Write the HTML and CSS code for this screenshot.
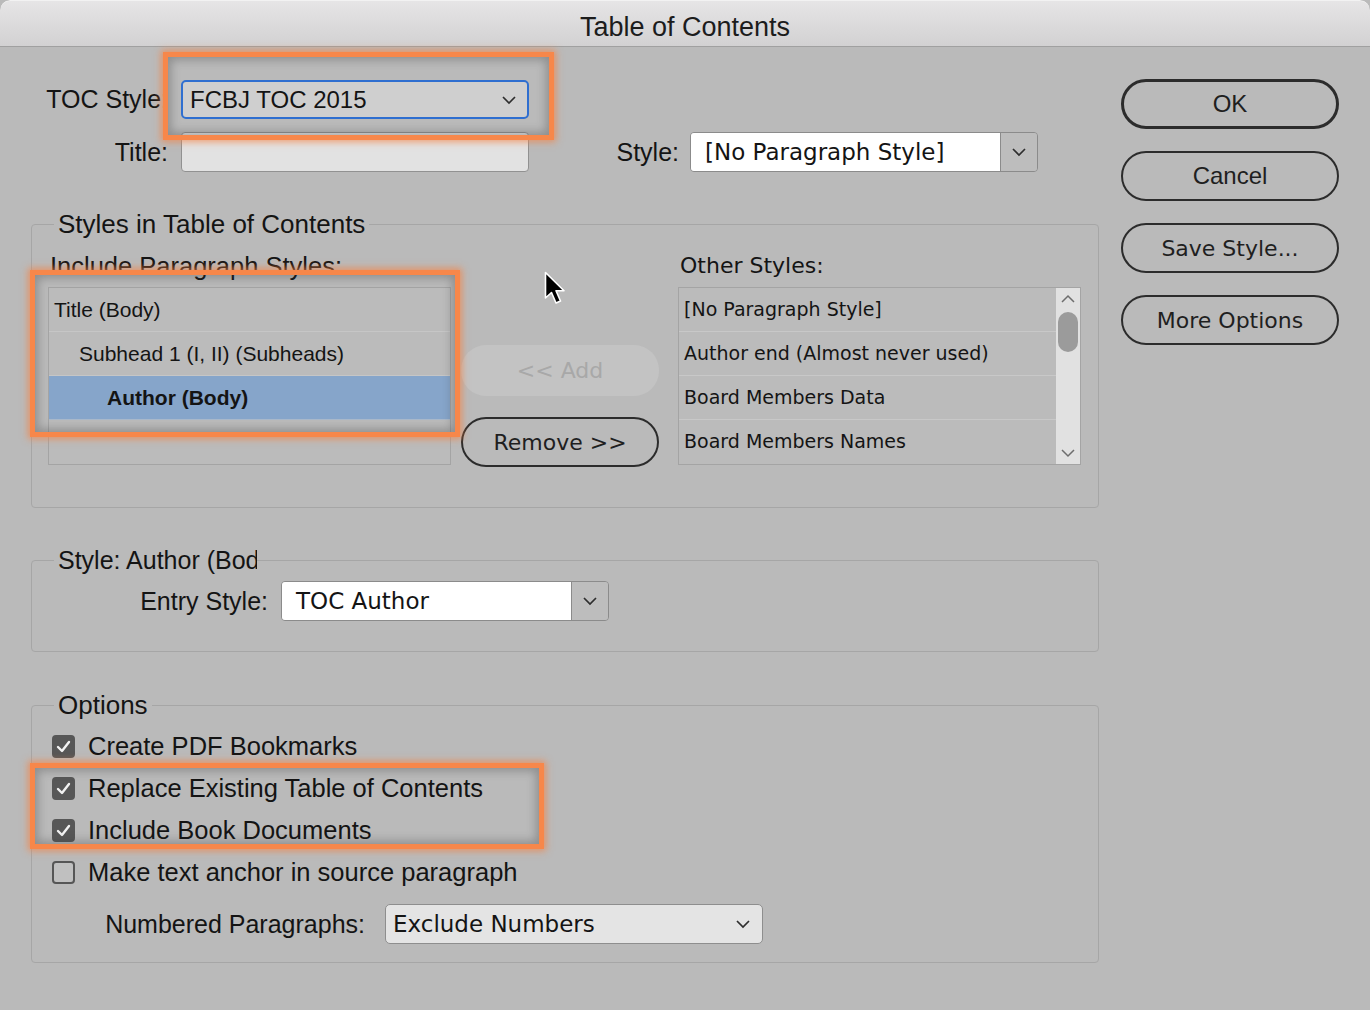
FILE: index.html
```html
<!DOCTYPE html>
<html lang="en">
<head>
    <meta charset="UTF-8">
    <title>Table of Contents</title>
    <link rel="stylesheet" href="styles.css">
</head>
<body>
<div id="dialog">
    <div id="titlebar">Table of Contents</div>

    <div id="content">
        <div id="main">
            <div class="row" id="rowToc">
                <label class="lbl">TOC Style:</label>
                <div class="select blue">
                    <span>FCBJ TOC 2015</span>
                    <svg class="chev" width="16" height="10" viewBox="0 0 16 10"><polyline points="2,2 8,8 14,2"/></svg>
                </div>
            </div>

            <div class="row" id="rowTitle">
                <label class="lbl">Title:</label>
                <div class="textfield"></div>
                <label class="lbl lblStyle">Style:</label>
                <div class="combo" id="comboStyle">
                    <span class="comboVal">[No Paragraph Style]</span>
                    <span class="comboBtn"><svg class="chev" width="16" height="10" viewBox="0 0 16 10"><polyline points="2,2 8,8 14,2"/></svg></span>
                </div>
            </div>

            <fieldset id="grpStyles">
                <legend>Styles in Table of Contents</legend>
                <div id="styleGrid">
                    <div class="colHead" id="headInc">Include Paragraph Styles:</div>
                    <div class="colHead" id="headOther">Other Styles:</div>

                    <ul class="list" id="incList">
                        <li class="lv0">Title (Body)</li>
                        <li class="lv1">Subhead 1 (I, II) (Subheads)</li>
                        <li class="lv2 sel">Author (Body)</li>
                    </ul>

                    <div id="midBtns">
                        <div class="btn disabled">&lt;&lt; Add</div>
                        <div class="btn lucida">Remove &gt;&gt;</div>
                    </div>

                    <div class="list" id="otherList">
                        <ul>
                            <li>[No Paragraph Style]</li>
                            <li>Author end (Almost never used)</li>
                            <li>Board Members Data</li>
                            <li>Board Members Names</li>
                        </ul>
                        <div class="scrollbar">
                            <svg class="arrow" width="16" height="10" viewBox="0 0 16 10"><polyline points="2,8 8,2 14,8"/></svg>
                            <div class="thumb"></div>
                            <svg class="arrow down" width="16" height="10" viewBox="0 0 16 10"><polyline points="2,2 8,8 14,2"/></svg>
                        </div>
                    </div>
                </div>
            </fieldset>

            <fieldset id="grpEntry">
                <legend class="clip">Style: Author (Body)</legend>
                <div class="row">
                    <label class="lbl lblEntry">Entry Style:</label>
                    <div class="combo" id="comboEntry">
                        <span class="comboVal">TOC Author</span>
                        <span class="comboBtn"><svg class="chev" width="16" height="10" viewBox="0 0 16 10"><polyline points="2,2 8,8 14,2"/></svg></span>
                    </div>
                </div>
            </fieldset>

            <fieldset id="grpOptions">
                <legend>Options</legend>
                <div class="check"><span class="box on"><svg width="23" height="23" viewBox="0 0 23 23"><polyline points="6,12 10,16 17,7"/></svg></span>Create PDF Bookmarks</div>
                <div class="check"><span class="box on"><svg width="23" height="23" viewBox="0 0 23 23"><polyline points="6,12 10,16 17,7"/></svg></span>Replace Existing Table of Contents</div>
                <div class="check"><span class="box on"><svg width="23" height="23" viewBox="0 0 23 23"><polyline points="6,12 10,16 17,7"/></svg></span>Include Book Documents</div>
                <div class="check"><span class="box"></span>Make text anchor in source paragraph</div>
                <div class="row" id="rowNum">
                    <label class="lbl lblNum">Numbered Paragraphs:</label>
                    <div class="select grey">
                        <span>Exclude Numbers</span>
                        <svg class="chev" width="16" height="10" viewBox="0 0 16 10"><polyline points="2,2 8,8 14,2"/></svg>
                    </div>
                </div>
            </fieldset>
        </div>

        <div id="side">
            <div class="btn default">OK</div>
            <div class="btn">Cancel</div>
            <div class="btn lucida">Save Style...</div>
            <div class="btn lucida">More Options</div>
        </div>
    </div>

    <!-- annotation marks drawn over the dialog -->
    <div class="mark" id="mark1"></div>
    <div class="mark" id="mark2"></div>
    <div class="mark" id="mark3"></div>

    <svg id="cursor" width="24" height="36" viewBox="0 0 24 36">
        <path d="M1.5 1.5 L1.5 27 L7.5 21.5 L12 32 L16.5 30 L12 19.8 L20 19.8 Z" fill="#000" stroke="#fff" stroke-width="1.6" stroke-linejoin="round"/>
    </svg>
</div>
</body>
</html>
```

FILE: styles.css
```css
* { box-sizing: border-box; }
body { margin: 0; background: #bababa; }
ul { margin: 0; padding: 0; list-style: none; }

#dialog {
    position: relative;
    width: 1370px; height: 1010px; overflow: hidden;
    background: #bababa;
    border-radius: 10px 10px 0 0;
    font-family: "Liberation Sans", Arial, sans-serif;
    color: #141414;
}
#titlebar {
    height: 47px;
    background: linear-gradient(#e6e5e6, #d2d1d2);
    border-bottom: 1px solid #a0a0a0;
    border-top: 1px solid #f2f2f2;
    border-radius: 10px 10px 0 0;
    text-align: center;
    font-size: 27px; line-height: 52px;
    color: #1c1c1c;
}

#content { display: flex; }
#main { width: 1099px; }
#side {
    width: 218px; margin-left: 22px; padding-top: 32px;
    display: flex; flex-direction: column; gap: 22px;
}

.row { display: flex; align-items: center; }
.lbl { font-size: 25px; text-align: right; flex: none; }
#rowToc { margin-top: 33px; }
#rowToc .lbl, #rowTitle .lbl { width: 168px; margin-right: 13px; }
#rowTitle { margin-top: 13px; }
#rowTitle .lblStyle { width: 150px; margin-right: 11px; }

.chev polyline, .arrow polyline { fill: none; stroke: #2e2e2e; stroke-width: 1.7; }

.select {
    display: flex; align-items: center; justify-content: space-between;
    border-radius: 5px; padding: 0 10px 0 7px;
}
.select.blue {
    width: 348px; height: 39px;
    border: 2px solid #2f6fd0; background: #cfcfcf;
    font-size: 24px;
}
.select.grey {
    width: 378px; height: 40px;
    border: 1px solid #8e8e8e; background: #e4e4e4;
    font-family: "DejaVu Sans", sans-serif; font-size: 23px;
    padding-left: 7px; padding-right: 11px;
}
.textfield {
    width: 348px; height: 40px;
    background: #e2e2e2; border: 1px solid #919191; border-radius: 4px;
}
.combo {
    display: flex; height: 40px;
    border: 1px solid #8b8b8b; border-radius: 4px; overflow: hidden;
    font-family: "DejaVu Sans", sans-serif; font-size: 23px;
}
.comboVal { flex: 1; background: #fff; padding-left: 14px; line-height: 38px; }
.comboBtn {
    width: 37px; border-left: 1px solid #8b8b8b; background: #bdbdbd;
    display: flex; align-items: center; justify-content: center;
}
#comboStyle { width: 348px; }
#comboEntry { width: 328px; }

fieldset {
    margin: 37px 0 0 31px; width: 1068px; min-width: 0;
    border: 1px solid #a6a6a6; border-radius: 4px;
}
legend {
    font-size: 26px; line-height: 30px;
    margin-left: 6px; padding: 0 4px;
}
legend.clip { max-width: 203px; overflow: hidden; white-space: nowrap; font-size: 25px; }

#grpStyles { padding: 12px 17px 42px 16px; }
#styleGrid {
    display: grid;
    grid-template-columns: 403px 10px 198px 19px 403px;
    grid-template-rows: 30px 178px;
    row-gap: 6px;
}
.colHead { font-size: 25.5px; line-height: 30px; }
#headInc { grid-column: 1; padding-left: 2px; }
#headOther { grid-column: 5; padding-left: 2px; font-family: "DejaVu Sans", sans-serif; font-size: 22px; }

.list { border: 1px solid #a4a4a4; background: #bbbbbb; }
#incList { grid-column: 1; grid-row: 2; }
#incList li {
    height: 44px; line-height: 44px; font-size: 21px;
    border-bottom: 1px solid #c6c6c6;
}
.lv0 { padding-left: 5px; }
.lv1 { padding-left: 30px; }
.lv2 { padding-left: 58px; }
#incList li.sel { background: #86a5ca; font-weight: bold; border-bottom-color: #aab9cb; }

#midBtns {
    grid-column: 3; grid-row: 2;
    display: flex; flex-direction: column; justify-content: flex-end;
    gap: 21px; margin-bottom: -2px;
}

#otherList { grid-column: 5; grid-row: 2; display: flex; }
#otherList ul { flex: 1; }
#otherList li {
    height: 44px; line-height: 43px; padding-left: 5px;
    font-family: "DejaVu Sans", sans-serif; font-size: 19px;
    border-bottom: 1px solid #c8c8c8;
}
#otherList li:last-child { border-bottom: none; }
.scrollbar {
    width: 24px; background: #e1e1e1;
    display: flex; flex-direction: column; align-items: center;
    padding-top: 6px;
}
.scrollbar .arrow polyline { stroke: #6d6d6d; stroke-width: 1.5; }
.thumb { width: 20px; height: 40px; margin-top: 8px; border-radius: 10px; background: #9b9b9b; }
.scrollbar .down { margin-top: auto; margin-bottom: 6px; }

.btn {
    height: 50px; border: 2px solid #2c2c2c; border-radius: 25px;
    display: flex; align-items: center; justify-content: center;
    font-size: 24px; color: #1f1f1f;
}
.btn.default { border-width: 3px; }
.btn.lucida { font-family: "DejaVu Sans", sans-serif; font-size: 22px; }
.btn.disabled {
    height: 51px; border: none; background: #c3c3c3; color: #a8a8a8;
    font-family: "DejaVu Sans", sans-serif; font-size: 22px;
}

#grpEntry { padding: 6px 17px 30px 16px; }
.lblEntry { width: 220px; margin-right: 13px; }

#grpOptions { margin-top: 38px; padding: 5px 17px 18px 16px; }
.check {
    height: 42px; display: flex; align-items: center;
    font-size: 25.5px;
}
.box {
    width: 23px; height: 23px; margin: 0 13px 0 4px;
    border: 2px solid #565656; border-radius: 4px; background: #c0c0c0;
    display: flex;
}
.box.on { background: #575757; border-color: #575757; }
.box svg { margin: -2px; }
.box polyline { fill: none; stroke: #f2f2f2; stroke-width: 2.4; stroke-linecap: round; stroke-linejoin: round; }
#rowNum { margin-top: 11px; }
.lblNum { width: 317px; margin-right: 20px; }

.mark {
    position: absolute;
    border: 5px solid #f7874a;
    box-shadow: 0 0 7px 2px rgba(246, 130, 66, 0.7), inset 0 0 10px 3px rgba(60, 60, 60, 0.35);
}
#mark1 { left: 163px; top: 52px; width: 391px; height: 88px; }
#mark2 { left: 30px; top: 270px; width: 430px; height: 167px; }
#mark3 { left: 30px; top: 763px; width: 514px; height: 86px; }

#cursor { position: absolute; left: 544px; top: 271px; }
```
